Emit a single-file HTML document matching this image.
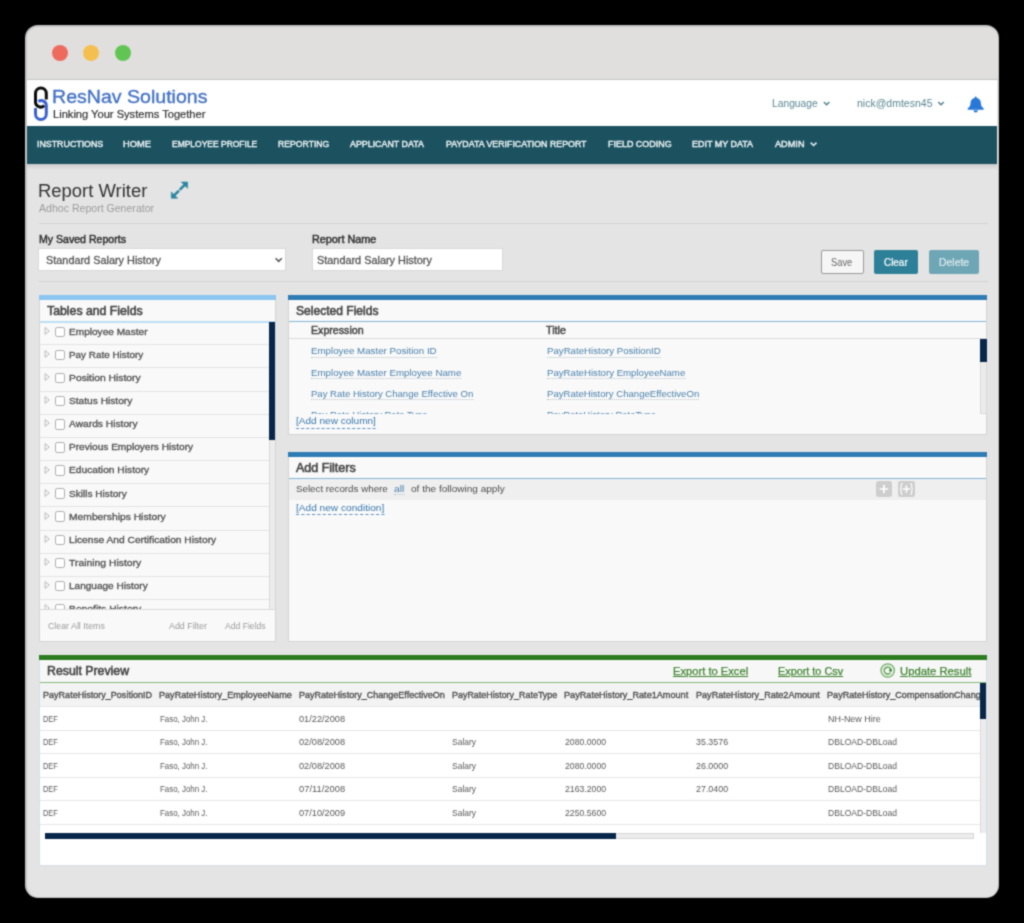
<!DOCTYPE html>
<html><head><meta charset="utf-8"><title>Report Writer</title>
<style>
html,body{margin:0;padding:0;background:#000;}
body{width:1024px;height:923px;position:relative;overflow:hidden;font-family:"Liberation Sans",sans-serif;}
.b{position:absolute;box-sizing:border-box;}
.t{position:absolute;white-space:nowrap;line-height:1;transform-origin:0 0;z-index:2;display:block;}
.t.top,.t.dash{z-index:6;}
.cov{z-index:4;}
.t.sfl{border-bottom:1px dotted #b9c3cc;padding-bottom:1.2px;}
.t.dot{border-bottom:1px dotted #b9c3cc;padding-bottom:1.2px;}
.t.dash{border-bottom:1px dashed #5e95c6;padding-bottom:1.6px;}
.t.ul{text-decoration:underline;text-decoration-thickness:1px;text-underline-offset:1.3px;}
svg{position:absolute;overflow:visible;}
.panel{background:#f9f9f9;border:1px solid #d4d4d4;}
</style></head><body>
<svg width="0" height="0" style="position:absolute"><filter id="soft" x="0" y="0" width="100%" height="100%" color-interpolation-filters="sRGB"><feConvolveMatrix order="3" kernelMatrix="0.04 0.11 0.04 0.11 0.4 0.11 0.04 0.11 0.04" edgeMode="duplicate" preserveAlpha="false"/></filter></svg>
<div id="wrap" style="position:absolute;left:0;top:0;width:1024px;height:923px;filter:url(#soft);">

<div class="b" style="left:25px;top:25px;width:974px;height:873px;border-radius:13px;background:#c4c4c4;"></div>
<div class="b" style="left:27px;top:26.5px;width:970.5px;height:870px;border-radius:11.5px;background:#e4e4e4;overflow:hidden;"><div class="b" style="left:0;top:0;width:100%;height:52.5px;background:#e0dfde;"></div><div class="b" style="left:0;top:52.5px;width:100%;height:1.2px;background:#c3c3c3;"></div></div>
<div class="b" style="left:51.6px;top:45.2px;width:16px;height:16px;border-radius:50%;background:#ee6a5e;"></div>
<div class="b" style="left:83.3px;top:45.2px;width:16px;height:16px;border-radius:50%;background:#f5bf4f;"></div>
<div class="b" style="left:114.6px;top:45.2px;width:16px;height:16px;border-radius:50%;background:#61c554;"></div>
<div class="b" style="left:27px;top:79.7px;width:970px;height:46.3px;background:#fff;"></div>
<div class="b" style="left:27px;top:126px;width:970px;height:37.6px;background:#1c5260;"></div>
<div class="b" style="left:27px;top:163.6px;width:970px;height:6.5px;background:linear-gradient(#cbcbcb,#e4e4e4);"></div>
<svg width="1024" height="923" style="left:0;top:0;z-index:3;pointer-events:none" viewBox="0 0 1024 923">
<path d="M46.3 99.6 V93.4 A5.4 5.4 0 0 0 35.5 93.4 V102 A5 5 0 0 0 44.2 105.4" fill="none" stroke="#0b0b0b" stroke-width="3"/>
<path d="M35.5 108 V114 A5.4 5.4 0 0 0 46.3 114 V105.6 A5 5 0 0 0 38.4 101.5" fill="none" stroke="#3a62cf" stroke-width="3"/>
<path d="M823.8 101.9 l2.8 2.8 l2.8 -2.8" fill="none" stroke="#4f7f8c" stroke-width="1.4"/>
<path d="M938.2 101.9 l2.8 2.8 l2.8 -2.8" fill="none" stroke="#4f7f8c" stroke-width="1.4"/>
<path d="M810.7 142.6 l2.9 2.9 l2.9 -2.9" fill="none" stroke="#e9f1f3" stroke-width="1.5"/>
<path d="M975.7 96.5 a1 1 0 0 1 1 1 v.4 c2.6 .5 4.1 2.3 4.1 4.6 c0 3.2 1.2 4.6 2.7 5.7 c.6 .6 .2 1.6 -.7 1.6 h-14.2 c-.9 0 -1.3 -1 -.7 -1.6 c1.5 -1.1 2.7 -2.5 2.7 -5.7 c0 -2.3 1.5 -4.1 4.1 -4.6 v-.4 a1 1 0 0 1 1 -1 z M973.5 110.2 h4.4 a2.2 2.2 0 0 1 -4.4 0 z" fill="#2878d7"/>
<g fill="#2b86a0" stroke="#2b86a0"><path d="M181.3 182 H187.6 V188.3 Z" stroke-width=".6" stroke-linejoin="round"/><path d="M180.4 189.2 L185 184.6" stroke-width="2.6" stroke-linecap="round"/><path d="M171.3 191.9 V198.2 H177.6 Z" stroke-width=".6" stroke-linejoin="round"/><path d="M178.2 191.3 L173.9 195.6" stroke-width="2.6" stroke-linecap="round"/></g>
<path d="M275.6 258.3 l3.1 3.1 l3.1 -3.1" fill="none" stroke="#555" stroke-width="1.5"/>
<circle cx="887.7" cy="670.5" r="6.6" fill="none" stroke="#7bb470" stroke-width="1.5"/>
<path d="M890.9 669.2 A3.5 3.5 0 1 0 890.6 672.6" fill="none" stroke="#6aa85e" stroke-width="1.6"/>
<circle cx="890.6" cy="670.4" r="1.4" fill="#2e8020"/>
</svg>
<div class="b" style="left:38.5px;top:222.6px;width:949px;height:1px;background:#d3d3d3;"></div>
<div class="b" style="left:38.5px;top:281.3px;width:949px;height:1px;background:#d3d3d3;"></div>
<div class="b" style="left:38.2px;top:247.8px;width:247.5px;height:23px;background:#fff;border:1px solid #d8d8d8;"></div>
<div class="b" style="left:312.2px;top:247.8px;width:191px;height:23px;background:#fff;border:1px solid #d8d8d8;"></div>
<div class="b" style="left:821px;top:250px;width:43px;height:23.5px;background:#f6f6f6;border:1px solid #9a9a9a;border-radius:2px;"></div>
<div class="b" style="left:873.6px;top:250px;width:44.8px;height:23.5px;background:#2e8099;border-radius:2px;"></div>
<div class="b" style="left:928.5px;top:250px;width:50.8px;height:23.5px;background:#6ea6b5;border-radius:2px;"></div>
<div class="b panel" style="left:38.5px;top:295px;width:237.5px;height:346.8px;"></div>
<div class="b" style="left:38.5px;top:295px;width:237.5px;height:5.2px;background:#8ac6ef;"></div>
<div class="b" style="left:39.5px;top:321.2px;width:235.5px;height:1.4px;background:#bcdff5;"></div>
<div class="b" style="left:39.5px;top:344.30px;width:229.5px;height:1px;background:#e4e4e4;"></div>
<div class="b" style="left:39.5px;top:367.45px;width:229.5px;height:1px;background:#e4e4e4;"></div>
<div class="b" style="left:39.5px;top:390.60px;width:229.5px;height:1px;background:#e4e4e4;"></div>
<div class="b" style="left:39.5px;top:413.75px;width:229.5px;height:1px;background:#e4e4e4;"></div>
<div class="b" style="left:39.5px;top:436.90px;width:229.5px;height:1px;background:#e4e4e4;"></div>
<div class="b" style="left:39.5px;top:460.05px;width:229.5px;height:1px;background:#e4e4e4;"></div>
<div class="b" style="left:39.5px;top:483.20px;width:229.5px;height:1px;background:#e4e4e4;"></div>
<div class="b" style="left:39.5px;top:506.35px;width:229.5px;height:1px;background:#e4e4e4;"></div>
<div class="b" style="left:39.5px;top:529.50px;width:229.5px;height:1px;background:#e4e4e4;"></div>
<div class="b" style="left:39.5px;top:552.65px;width:229.5px;height:1px;background:#e4e4e4;"></div>
<div class="b" style="left:39.5px;top:575.80px;width:229.5px;height:1px;background:#e4e4e4;"></div>
<div class="b" style="left:39.5px;top:598.95px;width:229.5px;height:1px;background:#e4e4e4;"></div>
<div class="b" style="left:54.5px;top:326.60px;width:10.6px;height:10.6px;border:1.3px solid #adadad;border-radius:2.2px;background:#fff;"></div>
<svg width="8" height="10" style="left:43.5px;top:326.00px" viewBox="0 0 8 10"><path d="M1.1 1.6 L5.2 5 L1.1 8.4 Z" fill="none" stroke="#b9b9b9" stroke-width="1"/></svg>
<div class="b" style="left:54.5px;top:349.70px;width:10.6px;height:10.6px;border:1.3px solid #adadad;border-radius:2.2px;background:#fff;"></div>
<svg width="8" height="10" style="left:43.5px;top:349.10px" viewBox="0 0 8 10"><path d="M1.1 1.6 L5.2 5 L1.1 8.4 Z" fill="none" stroke="#b9b9b9" stroke-width="1"/></svg>
<div class="b" style="left:54.5px;top:372.80px;width:10.6px;height:10.6px;border:1.3px solid #adadad;border-radius:2.2px;background:#fff;"></div>
<svg width="8" height="10" style="left:43.5px;top:372.20px" viewBox="0 0 8 10"><path d="M1.1 1.6 L5.2 5 L1.1 8.4 Z" fill="none" stroke="#b9b9b9" stroke-width="1"/></svg>
<div class="b" style="left:54.5px;top:395.90px;width:10.6px;height:10.6px;border:1.3px solid #adadad;border-radius:2.2px;background:#fff;"></div>
<svg width="8" height="10" style="left:43.5px;top:395.30px" viewBox="0 0 8 10"><path d="M1.1 1.6 L5.2 5 L1.1 8.4 Z" fill="none" stroke="#b9b9b9" stroke-width="1"/></svg>
<div class="b" style="left:54.5px;top:419.00px;width:10.6px;height:10.6px;border:1.3px solid #adadad;border-radius:2.2px;background:#fff;"></div>
<svg width="8" height="10" style="left:43.5px;top:418.40px" viewBox="0 0 8 10"><path d="M1.1 1.6 L5.2 5 L1.1 8.4 Z" fill="none" stroke="#b9b9b9" stroke-width="1"/></svg>
<div class="b" style="left:54.5px;top:442.10px;width:10.6px;height:10.6px;border:1.3px solid #adadad;border-radius:2.2px;background:#fff;"></div>
<svg width="8" height="10" style="left:43.5px;top:441.50px" viewBox="0 0 8 10"><path d="M1.1 1.6 L5.2 5 L1.1 8.4 Z" fill="none" stroke="#b9b9b9" stroke-width="1"/></svg>
<div class="b" style="left:54.5px;top:465.20px;width:10.6px;height:10.6px;border:1.3px solid #adadad;border-radius:2.2px;background:#fff;"></div>
<svg width="8" height="10" style="left:43.5px;top:464.60px" viewBox="0 0 8 10"><path d="M1.1 1.6 L5.2 5 L1.1 8.4 Z" fill="none" stroke="#b9b9b9" stroke-width="1"/></svg>
<div class="b" style="left:54.5px;top:488.30px;width:10.6px;height:10.6px;border:1.3px solid #adadad;border-radius:2.2px;background:#fff;"></div>
<svg width="8" height="10" style="left:43.5px;top:487.70px" viewBox="0 0 8 10"><path d="M1.1 1.6 L5.2 5 L1.1 8.4 Z" fill="none" stroke="#b9b9b9" stroke-width="1"/></svg>
<div class="b" style="left:54.5px;top:511.40px;width:10.6px;height:10.6px;border:1.3px solid #adadad;border-radius:2.2px;background:#fff;"></div>
<svg width="8" height="10" style="left:43.5px;top:510.80px" viewBox="0 0 8 10"><path d="M1.1 1.6 L5.2 5 L1.1 8.4 Z" fill="none" stroke="#b9b9b9" stroke-width="1"/></svg>
<div class="b" style="left:54.5px;top:534.50px;width:10.6px;height:10.6px;border:1.3px solid #adadad;border-radius:2.2px;background:#fff;"></div>
<svg width="8" height="10" style="left:43.5px;top:533.90px" viewBox="0 0 8 10"><path d="M1.1 1.6 L5.2 5 L1.1 8.4 Z" fill="none" stroke="#b9b9b9" stroke-width="1"/></svg>
<div class="b" style="left:54.5px;top:557.60px;width:10.6px;height:10.6px;border:1.3px solid #adadad;border-radius:2.2px;background:#fff;"></div>
<svg width="8" height="10" style="left:43.5px;top:557.00px" viewBox="0 0 8 10"><path d="M1.1 1.6 L5.2 5 L1.1 8.4 Z" fill="none" stroke="#b9b9b9" stroke-width="1"/></svg>
<div class="b" style="left:54.5px;top:580.70px;width:10.6px;height:10.6px;border:1.3px solid #adadad;border-radius:2.2px;background:#fff;"></div>
<svg width="8" height="10" style="left:43.5px;top:580.10px" viewBox="0 0 8 10"><path d="M1.1 1.6 L5.2 5 L1.1 8.4 Z" fill="none" stroke="#b9b9b9" stroke-width="1"/></svg>
<div class="b" style="left:54.5px;top:603.80px;width:10.6px;height:10.6px;border:1.3px solid #adadad;border-radius:2.2px;background:#fff;"></div>
<svg width="8" height="10" style="left:43.5px;top:603.20px" viewBox="0 0 8 10"><path d="M1.1 1.6 L5.2 5 L1.1 8.4 Z" fill="none" stroke="#b9b9b9" stroke-width="1"/></svg>
<div class="b" style="left:269px;top:322.4px;width:6.2px;height:287px;background:#ececec;border-left:1px solid #d9d9d9;"></div>
<div class="b" style="left:269.2px;top:322.4px;width:6px;height:118px;background:#08264a;"></div>
<div class="b cov" style="left:39.5px;top:609.2px;width:235.5px;height:31.6px;background:#f9f9f9;border-top:1px solid #d9d9d9;"></div>
<div class="b panel" style="left:287.8px;top:295px;width:699.4px;height:140.2px;"></div>
<div class="b" style="left:287.8px;top:295px;width:699.4px;height:5.3px;background:#2f7bb3;"></div>
<div class="b" style="left:288.8px;top:321px;width:697.4px;height:1.3px;background:#86b4d6;"></div>
<div class="b" style="left:288.8px;top:337.8px;width:697.4px;height:1px;background:#dcdcdc;"></div>
<div class="b" style="left:980px;top:338.6px;width:6.6px;height:75px;background:#ebebeb;border:1px solid #d9d9d9;border-top:0;"></div>
<div class="b" style="left:980px;top:338.6px;width:6.6px;height:23.4px;background:#08264a;"></div>
<div class="b cov" style="left:288.8px;top:414.2px;width:690px;height:20px;background:#f9f9f9;"></div>
<div class="b panel" style="left:287.8px;top:452px;width:699.4px;height:189.8px;"></div>
<div class="b" style="left:287.8px;top:452px;width:699.4px;height:5.3px;background:#2f7bb3;"></div>
<div class="b" style="left:288.8px;top:477.6px;width:697.4px;height:1.3px;background:#86b4d6;"></div>
<div class="b" style="left:288.8px;top:478.9px;width:697.4px;height:21px;background:#efefef;"></div>
<div class="b" style="left:875.6px;top:480.8px;width:16.4px;height:16.4px;background:#cdcdcd;border-radius:2.5px;"></div>
<div class="b" style="left:898.1px;top:480.8px;width:16.6px;height:16.4px;background:#cdcdcd;border-radius:2.5px;"></div>
<svg width="1024" height="923" style="left:0;top:0;z-index:3" viewBox="0 0 1024 923"><g stroke="#fff" fill="none" stroke-width="1.7"><path d="M879.6 489 h8.6 M883.9 484.7 v8.6"/><path d="M902.7 489 h7.4 M906.4 485.3 v7.4" stroke-width="1.5"/><path d="M902.6 483.6 q-1.5 0 -1.5 1.5 v2.4 q0 1.4 -1.2 1.5 q1.2 .1 1.2 1.5 v2.4 q0 1.5 1.5 1.5" stroke-width="1.1"/><path d="M910.2 483.6 q1.5 0 1.5 1.5 v2.4 q0 1.4 1.2 1.5 q-1.2 .1 -1.2 1.5 v2.4 q0 1.5 -1.5 1.5" stroke-width="1.1"/></g></svg>
<div class="b" style="left:38.5px;top:655px;width:948.7px;height:210.5px;background:#fff;border:1px solid #d3dfe8;"></div>
<div class="b" style="left:38.5px;top:655px;width:948.7px;height:5px;background:#2b7b1f;"></div>
<div class="b" style="left:39.5px;top:660px;width:946.7px;height:21.5px;background:#f7f7f7;"></div>
<div class="b" style="left:39.5px;top:681.5px;width:946.7px;height:1.3px;background:#84b97a;"></div>
<div class="b" style="left:39.5px;top:682.8px;width:941px;height:23.6px;background:#f3f3f3;"></div>
<div class="b" style="left:39.5px;top:706.40px;width:941px;height:1px;background:#e6e6e6;"></div>
<div class="b" style="left:39.5px;top:729.90px;width:941px;height:1px;background:#e6e6e6;"></div>
<div class="b" style="left:39.5px;top:753.40px;width:941px;height:1px;background:#e6e6e6;"></div>
<div class="b" style="left:39.5px;top:776.90px;width:941px;height:1px;background:#e6e6e6;"></div>
<div class="b" style="left:39.5px;top:800.40px;width:941px;height:1px;background:#e6e6e6;"></div>
<div class="b" style="left:39.5px;top:823.90px;width:941px;height:1px;background:#e6e6e6;"></div>
<div class="b cov" style="left:980.4px;top:682.8px;width:6px;height:150px;background:#ececec;border-left:1px solid #dadada;"></div>
<div class="b cov" style="left:980.4px;top:682.8px;width:6px;height:36.4px;background:#08264a;"></div>
<div class="b" style="left:45.3px;top:833.2px;width:929px;height:6.2px;background:#ececec;border:1px solid #d6d6d6;"></div>
<div class="b" style="left:45.3px;top:833.2px;width:570.7px;height:6.2px;background:#08264a;"></div>
<span class="t" style="left:52.22px;top:88.10px;font-size:18.2px;color:#4472c4;transform:scaleX(1.0755);-webkit-text-stroke:.35px #4472c4;">ResNav Solutions</span>
<span class="t" style="left:53.30px;top:109.20px;font-size:10.6px;color:#333;transform:scaleX(1.0491);-webkit-text-stroke:.2px #333;">Linking Your Systems Together</span>
<span class="t" style="left:772.20px;top:99.00px;font-size:10.4px;color:#5b8793;transform:scaleX(0.9881);">Language</span>
<span class="t" style="left:857.30px;top:99.00px;font-size:10.4px;color:#5b8793;transform:scaleX(1.0110);">nick@dmtesn45</span>
<span class="t" style="left:36.50px;top:139.40px;font-size:9.6px;color:#e9f1f3;transform:scaleX(0.9208);-webkit-text-stroke:0.45px #e9f1f3;">INSTRUCTIONS</span>
<span class="t" style="left:123.30px;top:139.40px;font-size:9.6px;color:#e9f1f3;transform:scaleX(0.9677);-webkit-text-stroke:0.45px #e9f1f3;">HOME</span>
<span class="t" style="left:171.70px;top:139.40px;font-size:9.6px;color:#e9f1f3;transform:scaleX(0.8835);-webkit-text-stroke:0.45px #e9f1f3;">EMPLOYEE PROFILE</span>
<span class="t" style="left:278.30px;top:139.40px;font-size:9.6px;color:#e9f1f3;transform:scaleX(0.9024);-webkit-text-stroke:0.45px #e9f1f3;">REPORTING</span>
<span class="t" style="left:350.00px;top:139.40px;font-size:9.6px;color:#e9f1f3;transform:scaleX(0.9237);-webkit-text-stroke:0.45px #e9f1f3;">APPLICANT DATA</span>
<span class="t" style="left:445.60px;top:139.40px;font-size:9.6px;color:#e9f1f3;transform:scaleX(0.9182);-webkit-text-stroke:0.45px #e9f1f3;">PAYDATA VERIFICATION REPORT</span>
<span class="t" style="left:607.60px;top:139.40px;font-size:9.6px;color:#e9f1f3;transform:scaleX(0.9323);-webkit-text-stroke:0.45px #e9f1f3;">FIELD CODING</span>
<span class="t" style="left:691.70px;top:139.40px;font-size:9.6px;color:#e9f1f3;transform:scaleX(0.9328);-webkit-text-stroke:0.45px #e9f1f3;">EDIT MY DATA</span>
<span class="t" style="left:774.50px;top:139.40px;font-size:9.6px;color:#e9f1f3;transform:scaleX(0.9544);-webkit-text-stroke:0.45px #e9f1f3;">ADMIN</span>
<span class="t" style="left:37.55px;top:183.20px;font-size:17.5px;color:#333;transform:scaleX(1.0535);">Report Writer</span>
<span class="t" style="left:38.60px;top:203.90px;font-size:10px;color:#9c9c9c;transform:scaleX(1.0564);">Adhoc Report Generator</span>
<span class="t" style="left:38.60px;top:235.20px;font-size:10px;color:#333;transform:scaleX(1.0568);-webkit-text-stroke:0.45px #333;">My Saved Reports</span>
<span class="t" style="left:311.70px;top:235.20px;font-size:10px;color:#333;transform:scaleX(1.0819);-webkit-text-stroke:0.45px #333;">Report Name</span>
<span class="t" style="left:46.00px;top:255.00px;font-size:10.5px;color:#555;transform:scaleX(1.0365);-webkit-text-stroke:.3px #555;">Standard Salary History</span>
<span class="t" style="left:316.70px;top:255.00px;font-size:10.5px;color:#555;transform:scaleX(1.0365);-webkit-text-stroke:.3px #555;">Standard Salary History</span>
<span class="t" style="left:831.30px;top:258.20px;font-size:10.4px;color:#666;transform:scaleX(0.8952);">Save</span>
<span class="t" style="left:883.60px;top:258.20px;font-size:10.4px;color:#fff;transform:scaleX(0.9539);-webkit-text-stroke:.2px #fff;">Clear</span>
<span class="t" style="left:938.70px;top:258.20px;font-size:10.4px;color:#dfeaed;transform:scaleX(1.0047);-webkit-text-stroke:.2px #dfeaed;">Delete</span>
<span class="t" style="left:47.30px;top:305.20px;font-size:12px;color:#444;transform:scaleX(1.0241);-webkit-text-stroke:0.55px #444;">Tables and Fields</span>
<span class="t" style="left:296.20px;top:305.20px;font-size:12px;color:#444;transform:scaleX(1.0049);-webkit-text-stroke:0.55px #444;">Selected Fields</span>
<span class="t" style="left:296.20px;top:461.90px;font-size:12px;color:#444;transform:scaleX(1.0397);-webkit-text-stroke:0.55px #444;">Add Filters</span>
<span class="t" style="left:47.30px;top:665.20px;font-size:12px;color:#444;transform:scaleX(1.0258);-webkit-text-stroke:0.55px #444;">Result Preview</span>
<span class="t tree" style="left:68.90px;top:327.80px;font-size:9.3px;color:#505050;transform:scaleX(1.0853);-webkit-text-stroke:.3px #505050;">Employee Master</span>
<span class="t tree" style="left:68.90px;top:350.90px;font-size:9.3px;color:#505050;transform:scaleX(1.0642);-webkit-text-stroke:.3px #505050;">Pay Rate History</span>
<span class="t tree" style="left:68.90px;top:374.00px;font-size:9.3px;color:#505050;transform:scaleX(1.1103);-webkit-text-stroke:.3px #505050;">Position History</span>
<span class="t tree" style="left:68.90px;top:397.10px;font-size:9.3px;color:#505050;transform:scaleX(1.0942);-webkit-text-stroke:.3px #505050;">Status History</span>
<span class="t tree" style="left:68.90px;top:420.20px;font-size:9.3px;color:#505050;transform:scaleX(1.1006);-webkit-text-stroke:.3px #505050;">Awards History</span>
<span class="t tree" style="left:68.90px;top:443.30px;font-size:9.3px;color:#505050;transform:scaleX(1.0871);-webkit-text-stroke:.3px #505050;">Previous Employers History</span>
<span class="t tree" style="left:68.90px;top:466.40px;font-size:9.3px;color:#505050;transform:scaleX(1.1009);-webkit-text-stroke:.3px #505050;">Education History</span>
<span class="t tree" style="left:68.90px;top:489.50px;font-size:9.3px;color:#505050;transform:scaleX(1.0849);-webkit-text-stroke:.3px #505050;">Skills History</span>
<span class="t tree" style="left:68.90px;top:512.60px;font-size:9.3px;color:#505050;transform:scaleX(1.1077);-webkit-text-stroke:.3px #505050;">Memberships History</span>
<span class="t tree" style="left:68.90px;top:535.70px;font-size:9.3px;color:#505050;transform:scaleX(1.0995);-webkit-text-stroke:.3px #505050;">License And Certification History</span>
<span class="t tree" style="left:68.90px;top:558.80px;font-size:9.3px;color:#505050;transform:scaleX(1.1152);-webkit-text-stroke:.3px #505050;">Training History</span>
<span class="t tree" style="left:68.90px;top:581.90px;font-size:9.3px;color:#505050;transform:scaleX(1.0802);-webkit-text-stroke:.3px #505050;">Language History</span>
<span class="t tree" style="left:68.90px;top:605.00px;font-size:9.3px;color:#505050;transform:scaleX(1.1092);-webkit-text-stroke:.3px #505050;">Benefits History</span>
<span class="t" style="left:310.70px;top:325.70px;font-size:10px;color:#444;transform:scaleX(1.0637);-webkit-text-stroke:0.45px #444;">Expression</span>
<span class="t" style="left:546.00px;top:325.70px;font-size:10px;color:#444;transform:scaleX(1.0717);-webkit-text-stroke:0.45px #444;">Title</span>
<span class="t sfl" style="left:311.20px;top:346.40px;font-size:9.6px;color:#4a80ab;transform:scaleX(1.0156);">Employee Master Position ID</span>
<span class="t sfl" style="left:546.50px;top:346.40px;font-size:9.6px;color:#4a80ab;transform:scaleX(1.0061);">PayRateHistory PositionID</span>
<span class="t sfl" style="left:311.20px;top:367.50px;font-size:9.6px;color:#4a80ab;transform:scaleX(1.0142);">Employee Master Employee Name</span>
<span class="t sfl" style="left:546.50px;top:367.50px;font-size:9.6px;color:#4a80ab;transform:scaleX(1.0049);">PayRateHistory EmployeeName</span>
<span class="t sfl" style="left:311.20px;top:388.60px;font-size:9.6px;color:#4a80ab;transform:scaleX(0.9959);">Pay Rate History Change Effective On</span>
<span class="t sfl" style="left:546.50px;top:388.60px;font-size:9.6px;color:#4a80ab;transform:scaleX(0.9994);">PayRateHistory ChangeEffectiveOn</span>
<span class="t sfl" style="left:311.20px;top:409.70px;font-size:9.6px;color:#4a80ab;transform:scaleX(0.9853);">Pay Rate History Rate Type</span>
<span class="t sfl" style="left:546.50px;top:409.70px;font-size:9.6px;color:#4a80ab;transform:scaleX(0.9878);">PayRateHistory RateType</span>
<span class="t dash" style="left:296.20px;top:416.40px;font-size:9.6px;color:#3777ac;transform:scaleX(1.0477);">[Add new column]</span>
<span class="t" style="left:296.20px;top:483.70px;font-size:9.6px;color:#4d4d4d;transform:scaleX(1.0181);">Select records where</span>
<span class="t dot" style="left:393.70px;top:483.70px;font-size:9.6px;color:#4a80ab;transform:scaleX(1.0774);">all</span>
<span class="t" style="left:410.50px;top:483.70px;font-size:9.6px;color:#4d4d4d;transform:scaleX(1.0456);">of the following apply</span>
<span class="t dash" style="left:296.20px;top:502.50px;font-size:9.6px;color:#3777ac;transform:scaleX(1.0545);">[Add new condition]</span>
<span class="t top" style="left:47.80px;top:622.40px;font-size:8.8px;color:#9a9a9a;transform:scaleX(1.0018);">Clear All Items</span>
<span class="t top" style="left:169.20px;top:622.40px;font-size:8.8px;color:#9a9a9a;transform:scaleX(1.0076);">Add Filter</span>
<span class="t top" style="left:225.00px;top:622.40px;font-size:8.8px;color:#9a9a9a;transform:scaleX(0.9772);">Add Fields</span>
<span class="t ul" style="left:672.60px;top:666.40px;font-size:10.8px;color:#3f8430;transform:scaleX(1.0345);-webkit-text-stroke:.25px #3f8430;">Export to Excel</span>
<span class="t ul" style="left:777.90px;top:666.40px;font-size:10.8px;color:#3f8430;transform:scaleX(1.0045);-webkit-text-stroke:.25px #3f8430;">Export to Csv</span>
<span class="t ul" style="left:899.70px;top:666.40px;font-size:10.8px;color:#3f8430;transform:scaleX(1.0436);-webkit-text-stroke:.25px #3f8430;">Update Result</span>
<span class="t" style="left:42.70px;top:691.20px;font-size:9.2px;color:#4e4e4e;transform:scaleX(0.9837);-webkit-text-stroke:0.35px #4e4e4e;">PayRateHistory_PositionID</span>
<span class="t" style="left:159.00px;top:691.20px;font-size:9.2px;color:#4e4e4e;transform:scaleX(0.9886);-webkit-text-stroke:0.35px #4e4e4e;">PayRateHistory_EmployeeName</span>
<span class="t" style="left:298.50px;top:691.20px;font-size:9.2px;color:#4e4e4e;transform:scaleX(0.9820);-webkit-text-stroke:0.35px #4e4e4e;">PayRateHistory_ChangeEffectiveOn</span>
<span class="t" style="left:451.50px;top:691.20px;font-size:9.2px;color:#4e4e4e;transform:scaleX(0.9724);-webkit-text-stroke:0.35px #4e4e4e;">PayRateHistory_RateType</span>
<span class="t" style="left:564.00px;top:691.20px;font-size:9.2px;color:#4e4e4e;transform:scaleX(0.9928);-webkit-text-stroke:0.35px #4e4e4e;">PayRateHistory_Rate1Amount</span>
<span class="t" style="left:695.50px;top:691.20px;font-size:9.2px;color:#4e4e4e;transform:scaleX(0.9888);-webkit-text-stroke:0.35px #4e4e4e;">PayRateHistory_Rate2Amount</span>
<span class="t lasthead" style="left:826.50px;top:691.20px;font-size:9.2px;color:#4e4e4e;transform:scaleX(0.9904);-webkit-text-stroke:0.35px #4e4e4e;">PayRateHistory_CompensationChange</span>
<span class="t" style="left:43.20px;top:715.00px;font-size:9.2px;color:#585858;transform:scaleX(0.8101);">DEF</span>
<span class="t" style="left:160.00px;top:715.00px;font-size:9.2px;color:#585858;transform:scaleX(0.8608);">Faso, John J.</span>
<span class="t" style="left:299.00px;top:715.00px;font-size:9.2px;color:#585858;transform:scaleX(1.0028);">01/22/2008</span>
<span class="t" style="left:827.50px;top:715.00px;font-size:9.2px;color:#585858;transform:scaleX(0.9723);">NH-New Hire</span>
<span class="t" style="left:43.20px;top:738.00px;font-size:9.2px;color:#585858;transform:scaleX(0.8101);">DEF</span>
<span class="t" style="left:160.00px;top:738.00px;font-size:9.2px;color:#585858;transform:scaleX(0.8608);">Faso, John J.</span>
<span class="t" style="left:299.00px;top:738.00px;font-size:9.2px;color:#585858;transform:scaleX(1.0028);">02/08/2008</span>
<span class="t" style="left:452.00px;top:738.00px;font-size:9.2px;color:#585858;transform:scaleX(0.9263);">Salary</span>
<span class="t" style="left:565.00px;top:738.00px;font-size:9.2px;color:#585858;transform:scaleX(0.9464);">2080.0000</span>
<span class="t" style="left:696.00px;top:738.00px;font-size:9.2px;color:#585858;transform:scaleX(0.9667);">35.3576</span>
<span class="t" style="left:827.50px;top:738.00px;font-size:9.2px;color:#585858;transform:scaleX(0.9333);">DBLOAD-DBLoad</span>
<span class="t" style="left:43.20px;top:762.00px;font-size:9.2px;color:#585858;transform:scaleX(0.8101);">DEF</span>
<span class="t" style="left:160.00px;top:762.00px;font-size:9.2px;color:#585858;transform:scaleX(0.8608);">Faso, John J.</span>
<span class="t" style="left:299.00px;top:762.00px;font-size:9.2px;color:#585858;transform:scaleX(1.0028);">02/08/2008</span>
<span class="t" style="left:452.00px;top:762.00px;font-size:9.2px;color:#585858;transform:scaleX(0.9263);">Salary</span>
<span class="t" style="left:565.00px;top:762.00px;font-size:9.2px;color:#585858;transform:scaleX(0.9464);">2080.0000</span>
<span class="t" style="left:696.00px;top:762.00px;font-size:9.2px;color:#585858;transform:scaleX(0.9667);">26.0000</span>
<span class="t" style="left:827.50px;top:762.00px;font-size:9.2px;color:#585858;transform:scaleX(0.9333);">DBLOAD-DBLoad</span>
<span class="t" style="left:43.20px;top:785.00px;font-size:9.2px;color:#585858;transform:scaleX(0.8101);">DEF</span>
<span class="t" style="left:160.00px;top:785.00px;font-size:9.2px;color:#585858;transform:scaleX(0.8608);">Faso, John J.</span>
<span class="t" style="left:299.00px;top:785.00px;font-size:9.2px;color:#585858;transform:scaleX(1.0179);">07/11/2008</span>
<span class="t" style="left:452.00px;top:785.00px;font-size:9.2px;color:#585858;transform:scaleX(0.9263);">Salary</span>
<span class="t" style="left:565.00px;top:785.00px;font-size:9.2px;color:#585858;transform:scaleX(0.9464);">2163.2000</span>
<span class="t" style="left:696.00px;top:785.00px;font-size:9.2px;color:#585858;transform:scaleX(0.9667);">27.0400</span>
<span class="t" style="left:827.50px;top:785.00px;font-size:9.2px;color:#585858;transform:scaleX(0.9333);">DBLOAD-DBLoad</span>
<span class="t" style="left:43.20px;top:809.00px;font-size:9.2px;color:#585858;transform:scaleX(0.8101);">DEF</span>
<span class="t" style="left:160.00px;top:809.00px;font-size:9.2px;color:#585858;transform:scaleX(0.8608);">Faso, John J.</span>
<span class="t" style="left:299.00px;top:809.00px;font-size:9.2px;color:#585858;transform:scaleX(1.0028);">07/10/2009</span>
<span class="t" style="left:452.00px;top:809.00px;font-size:9.2px;color:#585858;transform:scaleX(0.9263);">Salary</span>
<span class="t" style="left:565.00px;top:809.00px;font-size:9.2px;color:#585858;transform:scaleX(0.9464);">2250.5600</span>
<span class="t" style="left:827.50px;top:809.00px;font-size:9.2px;color:#585858;transform:scaleX(0.9333);">DBLOAD-DBLoad</span>
</div></body></html>
